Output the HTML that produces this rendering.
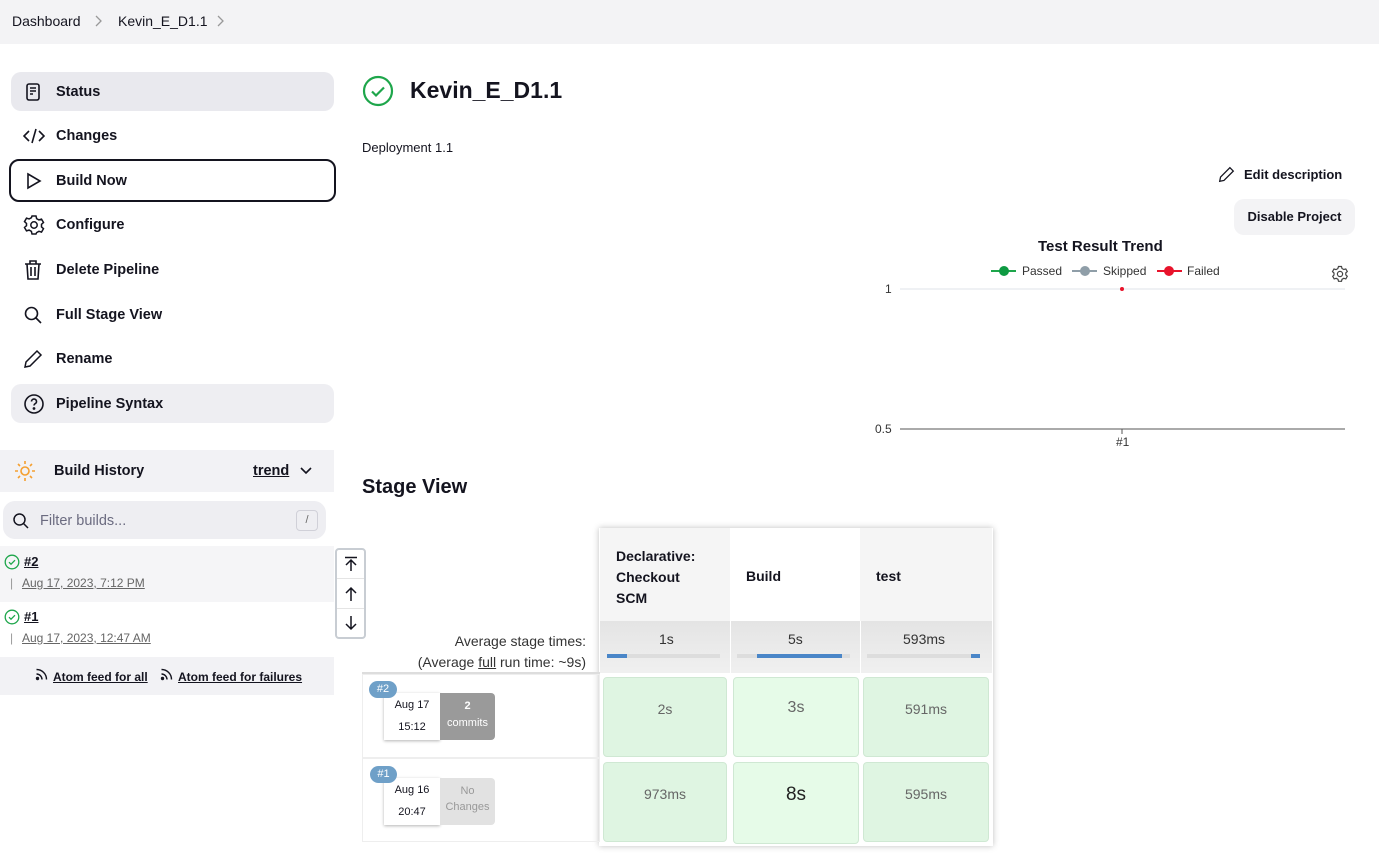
<!DOCTYPE html>
<html><head><meta charset="utf-8"><style>
*{box-sizing:border-box;margin:0;padding:0}
body{width:1379px;height:857px;position:relative;overflow:hidden;background:#fff;font-family:"Liberation Sans",sans-serif;color:#14141f}
.a{position:absolute}
.bc{left:0;top:0;width:1379px;height:44px;background:#f3f3f5;font-size:14px}
.nav{left:11px;width:323px;height:39px;border-radius:10px;font-size:14.5px;font-weight:600;display:flex;align-items:center;padding-left:45px}
.nav svg{position:absolute;left:12px;top:50%;transform:translateY(-50%)}
.sel{background:#e9e9ee}
.cell{position:absolute;border-radius:4px;display:flex;justify-content:center;padding-top:23px;font-size:14px;color:#666;background:#dff5e2;border:1px solid #cfe8d3}
u{text-decoration:underline}
</style></head><body>
<div class="a bc">
<span class="a" style="left:12px;top:13px">Dashboard</span>
<svg class="a" style="left:94px;top:15px" width="8" height="12" viewBox="0 0 8 12" fill="none" stroke="#999" stroke-width="1.3"><path d="M2 1l5 5-5 5"/></svg>
<span class="a" style="left:118px;top:13px">Kevin_E_D1.1</span>
<svg class="a" style="left:216px;top:15px" width="8" height="12" viewBox="0 0 8 12" fill="none" stroke="#999" stroke-width="1.3"><path d="M2 1l5 5-5 5"/></svg>
</div>

<div class="a nav sel" style="top:72px"><svg width="20" height="20" viewBox="0 0 20 20" fill="none" stroke="#14141f" stroke-width="1.6"><rect x="4" y="2" width="12" height="16" rx="2"/><path d="M7 6h6M7 9h6M7 12h3"/></svg>Status</div>
<div class="a nav" style="top:116px"><svg width="22" height="20" viewBox="0 0 22 20" fill="none" stroke="#14141f" stroke-width="1.6"><path d="M6 5l-5 5 5 5M16 5l5 5-5 5M13 3l-4 14"/></svg>Changes</div>
<div class="a nav" style="top:159px;left:9px;width:327px;height:43px;border:2.5px solid #14141f;border-radius:10px;padding-left:45px"><svg width="20" height="20" viewBox="0 0 20 20" fill="none" stroke="#14141f" stroke-width="1.6"><path d="M5 3l12 7-12 7z"/></svg>Build Now</div>
<div class="a nav" style="top:205px"><svg width="22" height="22" viewBox="0 0 22 22" fill="none" stroke="#14141f" stroke-width="1.5"><circle cx="11" cy="11" r="3.2"/><path d="M9 2h4l.6 2.6 2.3 1.3 2.6-.8 2 3.4-2 1.8v2.6l2 1.8-2 3.4-2.6-.8-2.3 1.3L13 20H9l-.6-2.6-2.3-1.3-2.6.8-2-3.4 2-1.8V9.4l-2-1.8 2-3.4 2.6.8 2.3-1.3z"/></svg>Configure</div>
<div class="a nav" style="top:250px"><svg width="20" height="22" viewBox="0 0 20 22" fill="none" stroke="#14141f" stroke-width="1.6"><path d="M2 5h16M7 5V2h6v3M4 5l1 15h10l1-15M8 8v9M12 8v9"/></svg>Delete Pipeline</div>
<div class="a nav" style="top:295px"><svg width="20" height="20" viewBox="0 0 20 20" fill="none" stroke="#14141f" stroke-width="1.6"><circle cx="8.5" cy="8.5" r="6"/><path d="M13 13l5 5"/></svg>Full Stage View</div>
<div class="a nav" style="top:339px"><svg width="20" height="20" viewBox="0 0 20 20" fill="none" stroke="#14141f" stroke-width="1.5"><path d="M2 18l1-5L14 2l4 4L7 17z"/></svg>Rename</div>
<div class="a nav sel" style="top:384px;background:#eeeef2"><svg width="22" height="22" viewBox="0 0 22 22" fill="none" stroke="#14141f" stroke-width="1.6"><circle cx="11" cy="11" r="9"/><path d="M8.5 8.5a2.5 2.5 0 1 1 3.5 2.3c-.7.4-1 .9-1 1.7"/><circle cx="11" cy="15.5" r=".6" fill="#14141f"/></svg>Pipeline Syntax</div>

<div class="a" style="left:0;top:450px;width:334px;height:42px;background:#f2f2f5"></div>
<svg class="a" style="left:14px;top:460px" width="22" height="22" viewBox="0 0 22 22" stroke="#f5a030" stroke-width="1.6" fill="none"><circle cx="11" cy="11" r="4"/><path d="M11 1v3M11 18v3M1 11h3M18 11h3M4 4l2 2M16 16l2 2M4 18l2-2M16 6l2-2"/></svg>
<span class="a" style="left:54px;top:463px;font-size:14.5px;font-weight:600">Build History</span>
<span class="a" style="left:253px;top:463px;font-size:14.5px;font-weight:600;text-decoration:underline">trend</span>
<svg class="a" style="left:299px;top:465px" width="14" height="12" viewBox="0 0 14 12" fill="none" stroke="#14141f" stroke-width="1.6"><path d="M2 3l5 5 5-5"/></svg>
<div class="a" style="left:3px;top:501px;width:323px;height:38px;background:#eeeef2;border-radius:12px"></div>
<svg class="a" style="left:12px;top:512px" width="18" height="18" viewBox="0 0 18 18" fill="none" stroke="#14141f" stroke-width="1.5"><circle cx="7.5" cy="7.5" r="5.5"/><path d="M11.5 11.5l4.5 4.5"/></svg>
<span class="a" style="left:40px;top:513px;font-size:14.5px;color:#6b6b80">Filter builds...</span>
<div class="a" style="left:296px;top:510px;width:22px;height:21px;border:1px solid #d0d0d8;border-radius:4px;font-size:11px;color:#666;text-align:center;line-height:19px">/</div>
<div class="a" style="left:0;top:546px;width:334px;height:56px;background:#f5f5f7"></div>
<svg class="a" style="left:4px;top:554px" width="16" height="16" viewBox="0 0 16 16" fill="none" stroke="#1ea64b" stroke-width="1.3"><circle cx="8" cy="8" r="6.8"/><path d="M5 8.2l2 2 4-4"/></svg>
<span class="a" style="left:24px;top:554px;font-size:13px;font-weight:700;text-decoration:underline">#2</span>
<span class="a" style="left:10px;top:576px;font-size:12px;color:#999">|</span>
<span class="a" style="left:22px;top:576px;font-size:12px;color:#666;text-decoration:underline">Aug 17, 2023, 7:12 PM</span>
<svg class="a" style="left:4px;top:609px" width="16" height="16" viewBox="0 0 16 16" fill="none" stroke="#1ea64b" stroke-width="1.3"><circle cx="8" cy="8" r="6.8"/><path d="M5 8.2l2 2 4-4"/></svg>
<span class="a" style="left:24px;top:609px;font-size:13px;font-weight:700;text-decoration:underline">#1</span>
<span class="a" style="left:10px;top:631px;font-size:12px;color:#999">|</span>
<span class="a" style="left:22px;top:631px;font-size:12px;color:#666;text-decoration:underline">Aug 17, 2023, 12:47 AM</span>
<div class="a" style="left:0;top:657px;width:334px;height:38px;background:#f2f2f5;font-size:12px;font-weight:600">
<svg class="a" style="left:35px;top:11px" width="13" height="13" viewBox="0 0 13 13" fill="none" stroke="#14141f" stroke-width="1.4"><circle cx="2.5" cy="10.5" r="1" fill="#14141f"/><path d="M1.5 6a5.5 5.5 0 0 1 5.5 5.5M1.5 1.5a10 10 0 0 1 10 10"/></svg><span class="a" style="left:53px;top:13px;text-decoration:underline">Atom feed for all</span>
<svg class="a" style="left:160px;top:11px" width="13" height="13" viewBox="0 0 13 13" fill="none" stroke="#14141f" stroke-width="1.4"><circle cx="2.5" cy="10.5" r="1" fill="#14141f"/><path d="M1.5 6a5.5 5.5 0 0 1 5.5 5.5M1.5 1.5a10 10 0 0 1 10 10"/></svg><span class="a" style="left:178px;top:13px;text-decoration:underline">Atom feed for failures</span>
</div>
<div class="a" style="left:335px;top:548px;width:31px;height:91px;border:2px solid #c8cdd3;border-radius:4px;background:#fff">
<div style="height:29px;border-bottom:1px solid #e4e4e4;position:relative"><svg class="a" style="left:6px;top:6px" width="16" height="16" viewBox="0 0 16 16" fill="none" stroke="#14141f" stroke-width="1.5"><path d="M2 1.5h12M8 4v11M3 9l5-5 5 5"/></svg></div>
<div style="height:30px;border-bottom:1px solid #e4e4e4;position:relative"><svg class="a" style="left:6px;top:7px" width="16" height="16" viewBox="0 0 16 16" fill="none" stroke="#14141f" stroke-width="1.5"><path d="M8 2v13M3 7l5-5 5 5"/></svg></div>
<div style="height:28px;position:relative"><svg class="a" style="left:6px;top:6px" width="16" height="16" viewBox="0 0 16 16" fill="none" stroke="#14141f" stroke-width="1.5"><path d="M8 1v13M3 9l5 5 5-5"/></svg></div></div>

<svg class="a" style="left:362px;top:75px" width="32" height="32" viewBox="0 0 32 32" fill="none" stroke="#1ea64b" stroke-width="2.2"><circle cx="16" cy="16" r="14"/><path d="M10 16.5l4 4 8-8"/></svg>
<span class="a" style="left:410px;top:77px;font-size:23px;font-weight:700">Kevin_E_D1.1</span>
<span class="a" style="left:362px;top:140px;font-size:13px">Deployment 1.1</span>
<svg class="a" style="left:1218px;top:166px" width="17" height="17" viewBox="0 0 20 20" fill="none" stroke="#14141f" stroke-width="1.5"><path d="M2 18l1-5L14 2l4 4L7 17z"/></svg>
<span class="a" style="left:1244px;top:167px;font-size:13px;font-weight:600">Edit description</span>
<div class="a" style="left:1234px;top:199px;width:121px;height:36px;background:#f3f3f5;border-radius:10px;font-size:13px;font-weight:600;text-align:center;line-height:36px">Disable Project</div>
<span class="a" style="left:1038px;top:238px;font-size:15px;font-weight:700">Test Result Trend</span>
<svg class="a" style="left:860px;top:255px" width="510" height="200">
<g font-family="Liberation Sans" font-size="12" fill="#333">
<line x1="131" y1="16" x2="156" y2="16" stroke="#1ea64b" stroke-width="2"/><circle cx="144" cy="16" r="5" fill="#0e9a42"/><text x="162" y="20">Passed</text>
<line x1="212" y1="16" x2="237" y2="16" stroke="#8f9ea8" stroke-width="2"/><circle cx="225" cy="16" r="5" fill="#8f9ea8"/><text x="243" y="20">Skipped</text>
<line x1="297" y1="16" x2="322" y2="16" stroke="#e8132b" stroke-width="2"/><circle cx="309" cy="16" r="5" fill="#e8132b"/><text x="327" y="20">Failed</text>
<text x="25" y="38">1</text><text x="15" y="178">0.5</text><text x="256" y="191">#1</text></g>
<line x1="40" y1="34" x2="485" y2="34" stroke="#dfe3e8"/>
<line x1="40" y1="174" x2="485" y2="174" stroke="#555"/>
<line x1="262" y1="174" x2="262" y2="179" stroke="#555"/>
<circle cx="262" cy="34" r="2" fill="#e8132b"/>
<g transform="translate(471,10)" fill="none" stroke="#444" stroke-width="1.2"><circle cx="9" cy="9" r="2.6"/><path d="M7.5 1.5h3l.5 2 1.8 1 2-.6 1.5 2.6-1.5 1.4v2l1.5 1.4-1.5 2.6-2-.6-1.8 1-.5 2h-3l-.5-2-1.8-1-2 .6-1.5-2.6L3 10V8L1.5 6.6 3 4l2 .6 1.8-1z"/></g>
</svg>

<span class="a" style="left:362px;top:476px;font-size:20px;font-weight:700">Stage View</span>
<div class="a" style="left:599px;top:528px;width:394px;height:318px;box-shadow:0 0 6px rgba(0,0,0,.25)"></div>
<div class="a" style="left:600px;top:528px;width:130px;height:93px;background:#f5f5f5"></div>
<div class="a" style="left:730px;top:528px;width:130px;height:93px;background:#fff"></div>
<div class="a" style="left:860px;top:528px;width:132px;height:93px;background:#f5f5f5"></div>
<div class="a" style="left:616px;top:546px;font-size:14px;font-weight:700;line-height:21px">Declarative:<br>Checkout<br>SCM</div>
<span class="a" style="left:746px;top:568px;font-size:14px;font-weight:700">Build</span>
<span class="a" style="left:876px;top:568px;font-size:14px;font-weight:700">test</span>
<div class="a" style="left:600px;top:621px;width:392px;height:52px;background:linear-gradient(#e4e4e4,#f0f0f0)"></div>
<div class="a" style="left:730px;top:621px;width:1px;height:52px;background:#fff"></div>
<div class="a" style="left:860px;top:621px;width:1px;height:52px;background:#fff"></div>
<span class="a" style="left:659px;top:631px;font-size:14px;color:#333">1s</span>
<span class="a" style="left:788px;top:631px;font-size:14px;color:#333">5s</span>
<span class="a" style="left:903px;top:631px;font-size:14px;color:#333">593ms</span>
<div class="a" style="left:607px;top:654px;width:113px;height:4px;background:#ddd"><div style="width:20px;height:4px;background:#4a86c8"></div></div>
<div class="a" style="left:737px;top:654px;width:113px;height:4px;background:#ddd"><div style="margin-left:20px;width:85px;height:4px;background:#4a86c8"></div></div>
<div class="a" style="left:867px;top:654px;width:113px;height:4px;background:#ddd"><div style="margin-left:104px;width:9px;height:4px;background:#4a86c8"></div></div>
<div class="a" style="left:362px;top:631px;width:224px;text-align:right;font-size:14px;color:#333;line-height:21px">Average stage times:<br>(Average <u>full</u> run time: ~9s)</div>
<div class="a" style="left:362px;top:672px;width:238px;height:2px;background:#ddd"></div>
<div class="a" style="left:362px;top:674px;width:238px;height:84px;border:1px solid #eee"></div>
<div class="a" style="left:362px;top:758px;width:238px;height:84px;border:1px solid #eee"></div>
<div class="a" style="left:384px;top:693px;width:56px;height:47px;background:#fff;box-shadow:0 1px 3px rgba(0,0,0,.3);font-size:11px;text-align:center;line-height:22px;padding-top:1px">Aug 17<br>15:12</div>
<div class="a" style="left:440px;top:693px;width:55px;height:47px;background:#9a9a9a;border-radius:0 4px 4px 0;color:#fff;font-size:11px;text-align:center;line-height:17px;padding-top:5px"><b>2</b><br>commits</div>
<div class="a" style="left:369px;top:681px;width:28px;height:17px;background:#6fa0c8;border-radius:9px;color:#fff;font-size:11px;text-align:center;line-height:17px">#2</div>
<div class="a" style="left:384px;top:778px;width:56px;height:47px;background:#fff;box-shadow:0 1px 3px rgba(0,0,0,.3);font-size:11px;text-align:center;line-height:22px;padding-top:1px">Aug 16<br>20:47</div>
<div class="a" style="left:440px;top:778px;width:55px;height:47px;background:#e2e2e2;border-radius:0 4px 4px 0;color:#999;font-size:11px;text-align:center;line-height:16px;padding-top:5px">No<br>Changes</div>
<div class="a" style="left:370px;top:766px;width:27px;height:17px;background:#6fa0c8;border-radius:9px;color:#fff;font-size:11px;text-align:center;line-height:17px">#1</div>
<div class="cell" style="left:603px;top:677px;width:124px;height:80px">2s</div>
<div class="cell" style="left:733px;top:677px;width:126px;height:80px;background:#e6fbe8;font-size:16px;padding-top:21px">3s</div>
<div class="cell" style="left:863px;top:677px;width:126px;height:80px">591ms</div>
<div class="cell" style="left:603px;top:762px;width:124px;height:80px">973ms</div>
<div class="cell" style="left:733px;top:762px;width:126px;height:82px;background:#e6fbe8;font-size:19px;color:#222;padding-top:21px">8s</div>
<div class="cell" style="left:863px;top:762px;width:126px;height:80px">595ms</div>
</body></html>
